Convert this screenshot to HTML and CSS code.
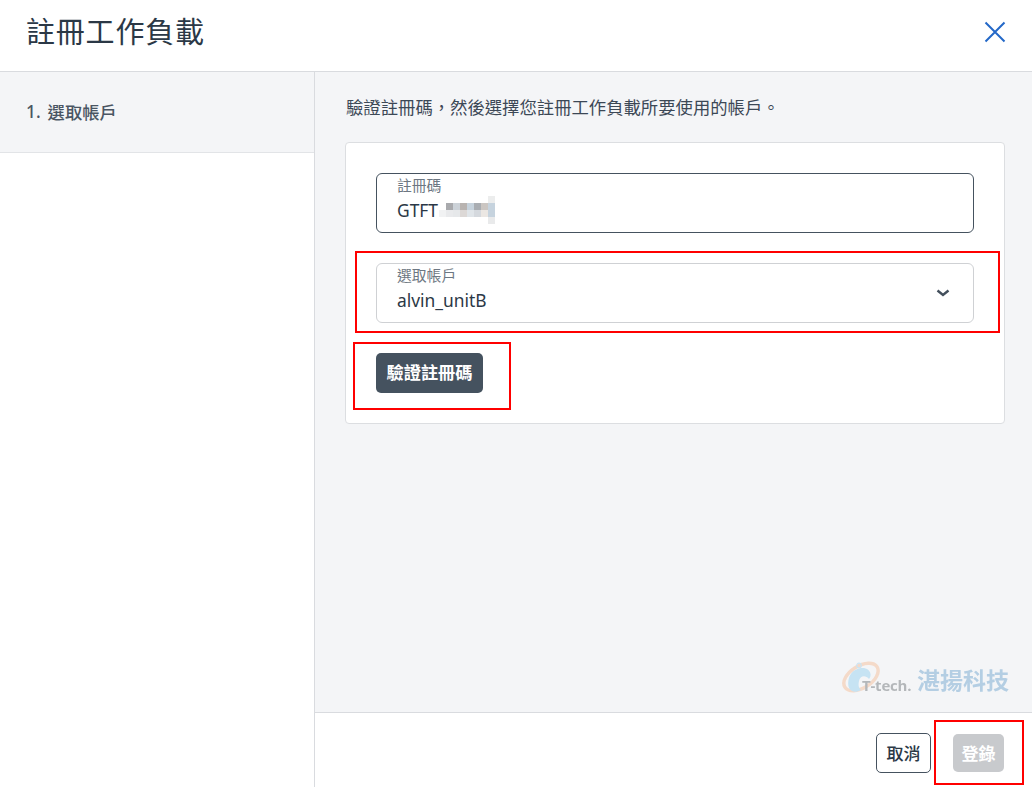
FILE: index.html
```html
<!DOCTYPE html>
<html lang="zh-Hant">
<head>
<meta charset="utf-8">
<title>註冊工作負載</title>
<link rel="stylesheet" href="styles.css">
</head>
<body>
<div class="dialog">
  <header class="head">
    <h1 class="title">註冊工作負載</h1>
    <button class="close" aria-label="關閉">
      <svg width="22" height="22" viewBox="0 0 22 22"><path d="M1.500 1.500 L20.500 20.500 M20.500 1.500 L1.500 20.500" fill="none" stroke="#2468c8" stroke-width="2"/></svg>
    </button>
  </header>
  <div class="body">
    <aside class="side">
      <div class="step"><span class="step-num">1.</span><span>選取帳戶</span></div>
    </aside>
    <div class="main">
      <main class="content">
        <p class="intro">驗證註冊碼，然後選擇您註冊工作負載所要使用的帳戶。</p>
        <section class="card">
          <div class="field field-dark">
            <span class="label">註冊碼</span>
            <span class="value">GTFT<svg class="blur" width="60" height="28" viewBox="0 0 60 28">
              <g>
                <rect x="0" y="14" width="7" height="7" fill="#f1f2f3"/><rect x="7" y="7" width="7" height="7" fill="#a9aaad"/><rect x="14" y="7" width="7" height="7" fill="#ccd2d8"/><rect x="21" y="7" width="7" height="7" fill="#b8b3b0"/><rect x="28" y="7" width="7" height="7" fill="#c6d2dc"/><rect x="35" y="7" width="7" height="7" fill="#a9adb2"/><rect x="42" y="7" width="7" height="7" fill="#cbc6c2"/><rect x="49" y="0" width="7" height="7" fill="#eceded"/><rect x="49" y="7" width="7" height="14" fill="#c6d3de"/><rect x="49" y="21" width="7" height="7" fill="#e9eaeb"/>
                <rect x="7" y="14" width="7" height="7" fill="#e9eaec"/><rect x="14" y="14" width="7" height="7" fill="#e6e8ea"/><rect x="21" y="14" width="7" height="7" fill="#dcd8d6"/><rect x="28" y="14" width="7" height="7" fill="#e0e5e9"/><rect x="35" y="14" width="7" height="7" fill="#d5d9de"/><rect x="42" y="14" width="7" height="7" fill="#ebe7e3"/>
              </g></svg></span>
          </div>
          <div class="field field-light">
            <span class="label">選取帳戶</span>
            <span class="value">alvin_unitB</span>
            <svg class="chev" width="14" height="8" viewBox="0 0 14 8"><path d="M1.500 1.500 L7 6 L12.500 1.500" fill="none" stroke="#434f5c" stroke-width="2.400"/></svg>
          </div>
          <button class="btn-verify">驗證註冊碼</button>
        </section>
        <div class="logo">
          <svg class="logo-mark" width="70" height="32" viewBox="0 0 70 32">
            <ellipse cx="19" cy="15" rx="19" ry="11" transform="rotate(-32 19 15)" fill="none" stroke="#f5d6c2" stroke-width="3.500"/>
            <path d="M7 26 C4 15 11 5 22 6 C29 7 30 14 27 17 C24 13 18 13 17 19 C16 24 17 26 19 28 C14 31 9 30 7 26 Z" fill="#bfe0f3"/>
            <circle cx="17" cy="3.500" r="2.300" fill="none" stroke="#c5e1f1" stroke-width="1.200"/>
            <text class="logo-latin" x="20" y="29">T-tech.</text>
          </svg>
          <span class="logo-name">湛揚科技</span>
        </div>
      </main>
      <footer class="foot">
        <button class="btn-cancel">取消</button>
        <button class="btn-submit" disabled>登錄</button>
      </footer>
    </div>
  </div>
</div>
<div class="mark mark-select"></div>
<div class="mark mark-verify"></div>
<div class="mark mark-submit"></div>
</body>
</html>
```
FILE: styles.css
```css
* { box-sizing: border-box; }
html, body { margin: 0; padding: 0; }
body {
  width: 1032px;
  height: 787px;
  overflow: hidden;
  position: relative;
  background: #fff;
  color: #2b3846;
  font-family: "Noto Sans", "Noto Sans CJK TC", sans-serif;
}
.dialog { display: flex; flex-direction: column; height: 787px; }
.head {
  height: 72px;
  flex: none;
  display: flex;
  align-items: center;
  justify-content: space-between;
  padding: 0 26px 8px 26px;
  border-bottom: 1px solid #d9dbdf;
}
.title { margin: 0; font-size: 29px; font-weight: 400; line-height: 36px; letter-spacing: 0.8px; color: #2b3846; }
.close { border: 0; background: none; padding: 0; display: flex; }
.body { flex: 1; display: flex; min-height: 0; }
.side { width: 315px; flex: none; border-right: 1px solid #d9dbdf; }
.step {
  height: 81px;
  background: #f4f5f7;
  border-bottom: 1px solid #e2e4e7;
  display: flex;
  align-items: center;
  gap: 7px;
  padding: 0 26px 2px;
  font-size: 17.300px;
  font-weight: 500;
  color: #4a5563;
}
.main { flex: 1; display: flex; flex-direction: column; min-width: 0; }
.content { flex: 1; background: #f4f5f7; padding: 24px 27px 0 30px; position: relative; }
.intro { margin: 0 0 24px 1px; font-size: 17.350px; line-height: 22px; color: #3c4856; }
.card {
  height: 282px;
  background: #fff;
  border: 1px solid #dcdee1;
  border-radius: 4px;
  padding: 30px 30px 0;
  display: flex;
  flex-direction: column;
  gap: 30px;
  align-items: flex-start;
}
.field {
  width: 598px;
  height: 60px;
  flex: none;
  border-radius: 6px;
  padding: 2px 20px 0;
  display: flex;
  flex-direction: column;
  position: relative;
}
.field-dark { border: 1px solid #45525f; }
.field-light { border: 1px solid #cfd1d4; }
.label { font-size: 14.800px; line-height: 18px; color: #6d7782; }
.value { font-size: 17.400px; line-height: 28px; margin-top: 2px; color: #2b3846; display: flex; align-items: center; }
.blur { flex: none; margin-left: 1px; }
.chev { position: absolute; right: 23px; top: 25px; }
.btn-verify {
  width: 107px;
  height: 40px;
  border: 0;
  border-radius: 5px;
  background: #45525f;
  color: #fff;
  font: 700 17.200px "Noto Sans", "Noto Sans CJK TC", sans-serif;
  padding: 0 0 3px;
}
.logo {
  position: absolute;
  right: 23px;
  bottom: 18px;
  display: flex;
  align-items: flex-end;
  opacity: 0.85;
  filter: blur(0.3px);
}
.logo-mark { display: block; overflow: visible; }
.logo-latin { font: 700 15px "Open Sans", sans-serif; fill: #a9adb0; letter-spacing: -0.2px; }
.logo-name { font-size: 23px; font-weight: 700; line-height: 28px; color: #aac8e0; margin-left: 5px; }
.foot {
  height: 75px;
  flex: none;
  border-top: 1px solid #d9dbdf;
  display: flex;
  align-items: center;
  justify-content: flex-end;
  gap: 22px;
  padding: 5px 28px 0 0;
}
.btn-cancel {
  width: 55px;
  height: 40px;
  background: #fff;
  border: 1px solid #45525f;
  border-radius: 5px;
  color: #2b3846;
  font: 500 17px "Noto Sans", "Noto Sans CJK TC", sans-serif;
  padding: 0 0 1px;
}
.btn-submit {
  width: 51px;
  height: 38px;
  background: #c8cacd;
  border: 0;
  border-radius: 5px;
  color: #fff;
  font: 700 17px "Noto Sans", "Noto Sans CJK TC", sans-serif;
  padding: 0 0 1px;
}
.mark { position: absolute; border: 2px solid #f00; }
.mark-select { left: 355px; top: 251px; width: 645px; height: 82px; }
.mark-verify { left: 353px; top: 342px; width: 158px; height: 68px; }
.mark-submit { left: 934px; top: 720px; width: 90px; height: 65px; }
```
